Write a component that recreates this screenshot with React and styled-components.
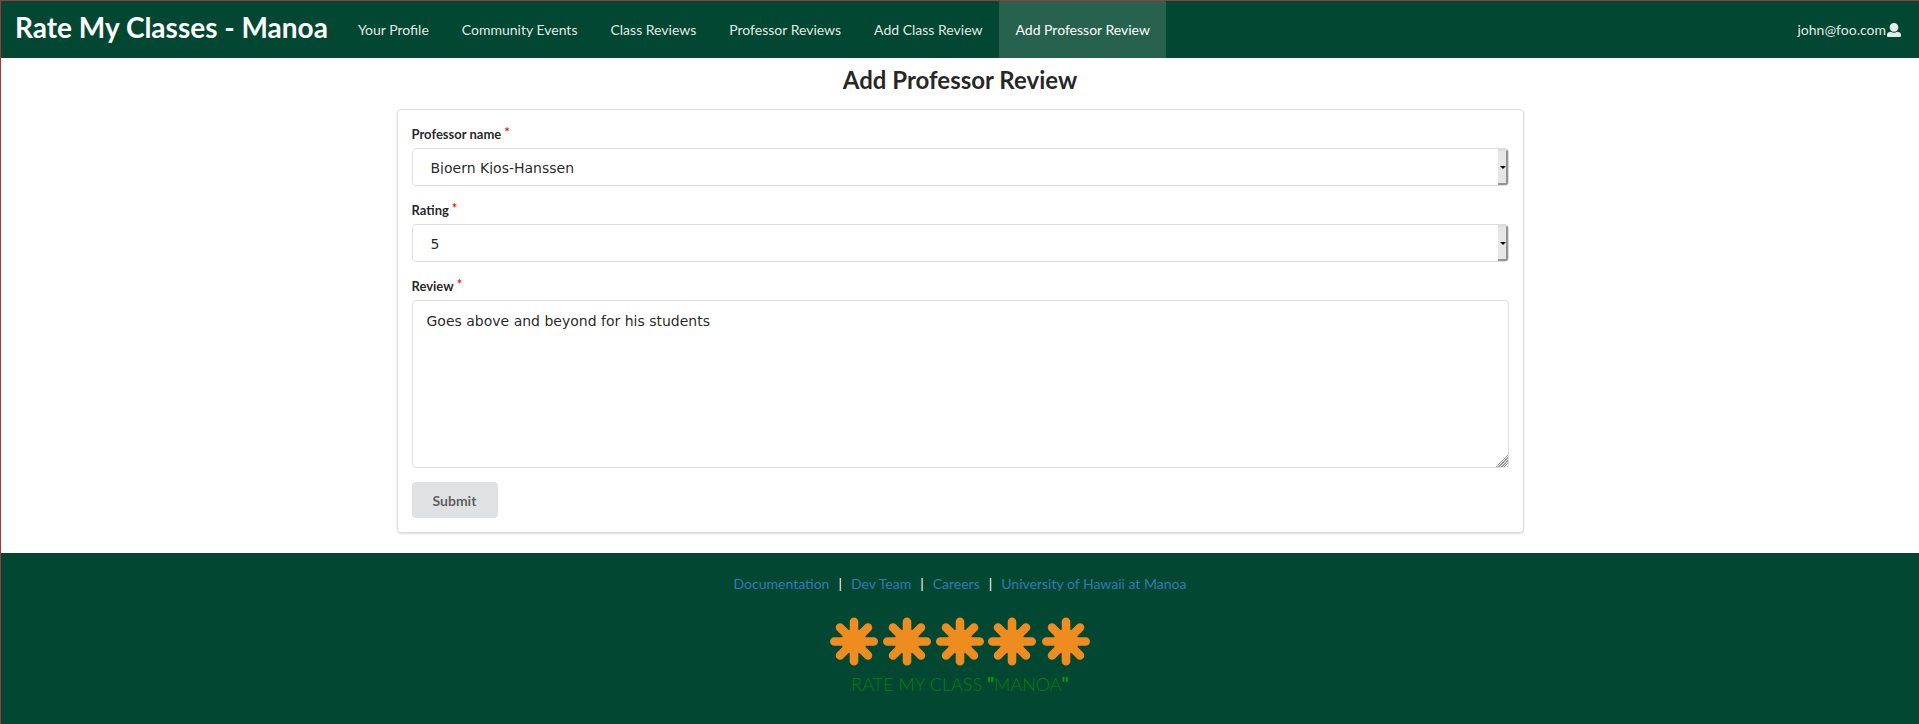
import React from 'react';
import styled, { createGlobalStyle } from 'styled-components';

const green = '#024731';
const ink = 'rgba(0, 0, 0, 0.87)';
const line = '#dcddde';

const GlobalStyle = createGlobalStyle`
  *, *::before, *::after { box-sizing: border-box; }
  body {
    margin: 0;
    background: #fff;
    color: ${ink};
    font-family: Lato, 'Liberation Sans', sans-serif;
    font-size: 14px;
    line-height: 20px;
  }
`;

const Page = styled.div`
  display: flex;
  flex-direction: column;
  min-height: 100vh;
  border-top: 1px solid #963c3c;
  border-left: 1px solid #963c3c;
`;

const NavBar = styled.nav`
  display: flex;
  align-items: stretch;
  gap: 1px;
  min-height: 57px;
  background: ${green};
`;

const NavLink = styled.a`
  display: flex;
  align-items: center;
  padding: 0 16px;
  font-size: 14px;
  text-decoration: none;
  white-space: nowrap;
  color: ${(p) => (p.$active ? '#fff' : 'rgba(255, 255, 255, 0.9)')};
  background: ${(p) => (p.$active ? 'rgba(255, 255, 255, 0.15)' : 'transparent')};
`;

const Brand = styled(NavLink)`
  padding: 0 13px 6px 14px;
  color: #fff;
  font-size: 28px;
  font-weight: 700;
`;

const AccountLink = styled(NavLink)`
  margin-left: auto;
`;

const AccountIcon = styled.svg`
  width: 14px;
  height: 14px;
  margin: 0 2px 0 1px;
  fill: currentColor;
`;

const Main = styled.main`
  width: 100%;
  max-width: 1127px;
  margin: 0 auto;
  padding: 7px 0 20px;
`;

const Title = styled.h2`
  margin: 0 0 14px;
  font-size: 24px;
  line-height: 30px;
  font-weight: 700;
  text-align: center;
`;

const Card = styled.form`
  display: flex;
  flex-direction: column;
  gap: 14px;
  padding: 14px;
  border: 1px solid ${line};
  border-radius: 4px;
  box-shadow: 0 1px 2px rgba(34, 36, 38, 0.15);
`;

const Field = styled.div`
  display: flex;
  flex-direction: column;
  gap: 4px;
`;

const Label = styled.label`
  font-size: 13px;
  line-height: 20px;
  font-weight: 700;

  &::after {
    content: '*';
    margin-left: 3px;
    color: #db2828;
    font-weight: 700;
    vertical-align: top;
    line-height: 16px;
  }
`;

const SelectBox = styled.div`
  display: grid;
  border: 1px solid ${line};
  border-radius: 4px;
  overflow: hidden;
  position: relative;
`;

const Select = styled.select`
  appearance: none;
  width: 100%;
  height: 36px;
  padding: 11px 18px;
  border: 0;
  background: #fff;
  color: ${ink};
  font-family: 'DejaVu Sans', sans-serif;
  font-size: 14px;
`;

const SelectArrow = styled.span`
  position: absolute;
  top: 0;
  right: 0;
  bottom: 0;
  display: grid;
  place-items: center;
  width: 10px;
  padding-left: 2px;
  border: solid;
  border-width: 2px 2px 2px 0;
  border-color: #dcddde #949494 #949494;
  background: #e6e6e4;
  pointer-events: none;

  &::before {
    content: '';
    border: solid transparent;
    border-width: 3px 3px 0;
    border-top-color: #000;
  }
`;

const TextArea = styled.textarea`
  display: block;
  width: 100%;
  height: 168px;
  padding: 11px 14px;
  border: 1px solid ${line};
  border-radius: 4px;
  color: ${ink};
  font-family: 'DejaVu Sans', sans-serif;
  font-size: 14px;
  line-height: 18px;
  resize: vertical;

  &::-webkit-resizer {
    background:
      linear-gradient(135deg, #fff 60%, transparent 60%),
      repeating-linear-gradient(135deg, #999 0 1px, #fff 1px 2px);
  }
`;

const SubmitButton = styled.button`
  align-self: flex-start;
  height: 36px;
  padding: 0 22px 0 21px;
  border: 0;
  border-radius: 4px;
  background: #e0e1e2;
  color: rgba(0, 0, 0, 0.6);
  font-family: inherit;
  font-size: 14px;
  font-weight: 700;
`;

const Footer = styled.footer`
  display: flex;
  flex: 1;
  flex-direction: column;
  align-items: center;
  padding: 21px 0 24px;
  background: ${green};
`;

const FooterLinks = styled.div`
  display: flex;
  gap: 9px;
  color: #fff;
`;

const FooterLink = styled.a`
  color: #337ab7;
  text-decoration: none;
`;

const Logo = styled.figure`
  display: flex;
  flex-direction: column;
  align-items: center;
  margin: 22px 0 0;
`;

const LogoStars = styled.svg`
  display: block;
  width: 260px;
  height: 50px;
`;

const LogoText = styled.figcaption`
  color: #028010;
  font-size: 18px;
  font-weight: 300;
  line-height: 36px;
  white-space: nowrap;
`;

const LogoQuote = styled.span`
  color: #0a9a08;
  font-weight: 700;
`;

const links = ['Your Profile', 'Community Events', 'Class Reviews', 'Professor Reviews', 'Add Class Review', 'Add Professor Review'];
const footerLinks = ['Documentation', 'Dev Team', 'Careers', 'University of Hawaii at Manoa'];
const starCentres = [24, 77, 130, 182, 236];

function SelectField({ id, label, options }) {
  return (
    <Field>
      <Label htmlFor={id}>{label}</Label>
      <SelectBox>
        <Select id={id} defaultValue={options[0]} required>
          {options.map((o) => <option key={o}>{o}</option>)}
        </Select>
        <SelectArrow aria-hidden="true" />
      </SelectBox>
    </Field>
  );
}

export default function App() {
  return (
    <>
      <GlobalStyle />
      <Page>
        <NavBar>
          <Brand href="#home">Rate My Classes - Manoa</Brand>
          {links.map((text) => (
            <NavLink key={text} href="#nav" $active={text === 'Add Professor Review'}>{text}</NavLink>
          ))}
          <AccountLink href="#account">
            john@foo.com
            <AccountIcon viewBox="0 0 512 512" aria-hidden="true">
              <path d="M256 0c88.366 0 160 71.634 160 160s-71.634 160-160 160S96 248.366 96 160 167.634 0 256 0zm183.283 333.821l-71.313-17.828c-74.923 53.89-165.738 41.864-223.94 0l-71.313 17.828C29.981 344.505 0 382.903 0 426.955V464c0 26.51 21.49 48 48 48h416c26.51 0 48-21.49 48-48v-37.045c0-44.052-29.981-82.45-72.717-93.134z" />
            </AccountIcon>
          </AccountLink>
        </NavBar>
        <Main>
          <Title>Add Professor Review</Title>
          <Card onSubmit={(e) => e.preventDefault()}>
            <SelectField id="professor" label="Professor name" options={['Bjoern Kjos-Hanssen']} />
            <SelectField id="rating" label="Rating" options={['5', '4', '3', '2', '1']} />
            <Field>
              <Label htmlFor="review">Review</Label>
              <TextArea id="review" defaultValue="Goes above and beyond for his students" />
            </Field>
            <SubmitButton type="submit">Submit</SubmitButton>
          </Card>
        </Main>
        <Footer>
          <FooterLinks>
            {footerLinks.map((text, i) => (
              <React.Fragment key={text}>
                {i > 0 && <span>|</span>}
                <FooterLink href="#footer">{text}</FooterLink>
              </React.Fragment>
            ))}
          </FooterLinks>
          <Logo>
            <LogoStars viewBox="0 0 260 50" aria-hidden="true">
              {starCentres.map((x) => (
                <g key={x} transform={`translate(${x} 25.5)`} stroke="#ef8c1f" strokeWidth="8.6" strokeLinecap="round">
                  <path d="M0-19.7V19.7M-19.7 0H19.7M-14-14L14 14M-14 14L14-14" />
                  <circle r="12.5" fill="#ef8c1f" stroke="none" />
                </g>
              ))}
            </LogoStars>
            <LogoText>
              RATE MY CLASS <LogoQuote>"</LogoQuote>MANOA<LogoQuote>"</LogoQuote>
            </LogoText>
          </Logo>
        </Footer>
      </Page>
    </>
  );
}
